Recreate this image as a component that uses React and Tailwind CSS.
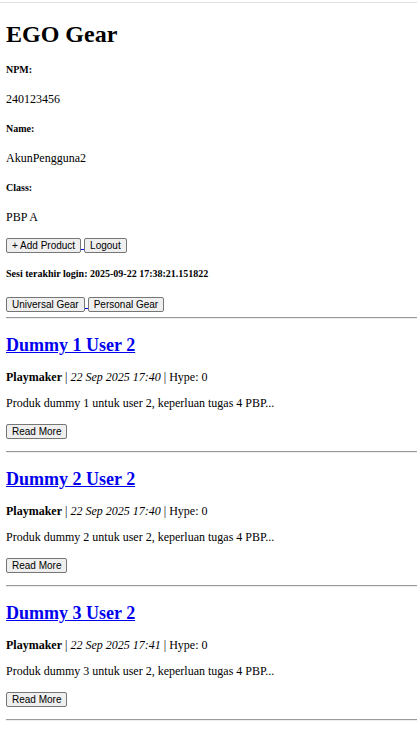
import React from 'react';

const products = [
  { id: 1, name: 'Dummy 1 User 2', category: 'Playmaker', date: '22 Sep 2025 17:40', hype: 0, desc: 'Produk dummy 1 untuk user 2, keperluan tugas 4 PBP...' },
  { id: 2, name: 'Dummy 2 User 2', category: 'Playmaker', date: '22 Sep 2025 17:40', hype: 0, desc: 'Produk dummy 2 untuk user 2, keperluan tugas 4 PBP...' },
  { id: 3, name: 'Dummy 3 User 2', category: 'Playmaker', date: '22 Sep 2025 17:41', hype: 0, desc: 'Produk dummy 3 untuk user 2, keperluan tugas 4 PBP...' },
];

const Btn = ({ children }) => (
  <button className="h-[15px] px-[5px] border border-[#767676] bg-[#efefef] rounded-[2px] text-[10px] leading-[11px] text-black font-['Liberation_Sans',Arial,sans-serif]">
    {children}
  </button>
);

const Gap = () => (
  <span className="w-[3px] h-[12px] border-b border-[#0000ee] self-start" />
);

const Hr = () => (
  <div className="h-[2px] border-t border-[#9a9a9a] border-b border-b-[#eeeeee] -mr-[6px]" />
);

const Field = ({ label, value, first }) => (
  <>
    <h5 className={`${first ? 'mt-[16px]' : 'mt-[17px]'} text-[10px] leading-[12px] font-bold`}>{label}</h5>
    <p className="mt-[16px] text-[12px] leading-[14px]">{value}</p>
  </>
);

export default function App() {
  return (
    <div className="min-h-[750px] bg-white text-black font-['Liberation_Serif','Times_New_Roman',serif]">
      <div className="pt-[2px]">
        <div className="h-px bg-[#e0e0e0]" />
      </div>
      <div className="flex flex-col px-[6px]">
        <h1 className="mt-[17px] text-[24px] leading-[28px] font-bold">EGO Gear</h1>

        <Field label="NPM:" value="240123456" first />
        <Field label="Name:" value="AkunPengguna2" />
        <Field label="Class:" value="PBP A" />

        <div className="mt-[14px] flex items-start">
          <Btn>+ Add Product</Btn>
          <Gap />
          <Btn>Logout</Btn>
        </div>

        <h5 className="mt-[15px] text-[10px] leading-[12px] font-bold">Sesi terakhir login: 2025-09-22 17:38:21.151822</h5>

        <div className="mt-[17px] flex items-start">
          <Btn>Universal Gear</Btn>
          <Gap />
          <Btn>Personal Gear</Btn>
        </div>

        <div className="mt-[5px]">
          <Hr />
        </div>

        {products.map((p) => (
          <div key={p.id} className="flex flex-col">
            <h2 className="mt-[16px] text-[18px] leading-[21px] font-bold">
              <a href="#" className="text-[#0000ee] underline">{p.name}</a>
            </h2>
            <p className="mt-[14px] text-[12px] leading-[14px]">
              <b>{p.category}</b> | <i>{p.date}</i> | Hype: {p.hype}
            </p>
            <p className="mt-[12px] text-[12px] leading-[14px]">{p.desc}</p>
            <div className="mt-[14px] flex">
              <Btn>Read More</Btn>
            </div>
            <div className="mt-[12px]">
              <Hr />
            </div>
          </div>
        ))}
      </div>
    </div>
  );
}
